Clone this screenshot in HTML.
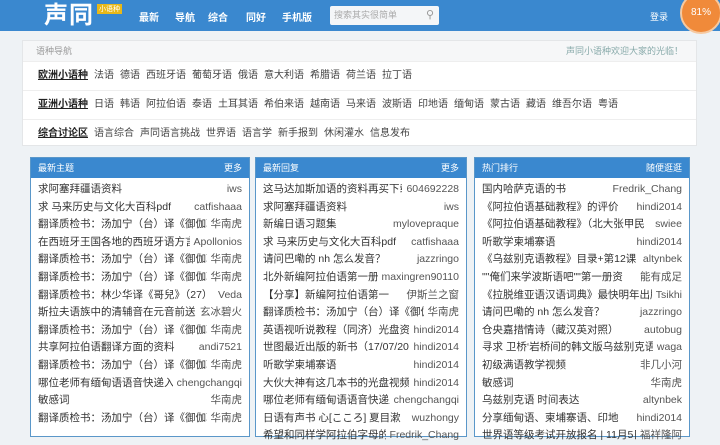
<html><head><style>
body{margin:0;width:720px;height:427px;overflow:hidden;background:#eef2f5;font-family:"Liberation Sans","Noto Sans CJK SC",sans-serif;}
.hd{position:absolute;left:0;top:0;width:720px;height:31px;background:#3a88cf;}
.logo{position:absolute;left:44px;top:2px;color:#fff;font-size:24px;line-height:28px;font-weight:bold;letter-spacing:1px;}
.tag{position:absolute;left:97px;top:4px;background:#e8b818;color:#fff;font-size:7px;padding:0 2px;}
.nav a{position:absolute;top:9px;color:#fff;font-size:10px;font-weight:bold;}
.search{position:absolute;left:330px;top:6px;width:109px;height:19px;background:#f4f6f8;border-radius:2px;font-size:9px;color:#aaa;line-height:19px;padding-left:4px;box-sizing:border-box;}
.box{position:absolute;left:22px;top:40px;width:675px;height:106px;background:#fff;border:1px solid #e4e6e8;box-sizing:border-box;}
.box .t{height:20px;background:#f6f7f8;font-size:9px;color:#999;line-height:20px;padding:0 13px;}
.box .t span{float:right;color:#8aa;}
.row{height:28px;border-top:1px solid #eee;font-size:10px;color:#444;line-height:28px;padding-left:15px;}
.row b{text-decoration:underline;color:#222;margin-right:6px;}
.row i{font-style:normal;margin-right:6px;}
.p{position:absolute;top:157px;height:280px;background:#fff;border:1px solid #5a97c9;box-sizing:border-box;}
.p .h{height:20px;background:#3a88cf;color:#fff;font-size:9px;line-height:20px;padding:0 7px;}
.p .h span{float:right;}
.p ul{margin:0;padding:3px 7px 0;list-style:none;}
.p li{display:flex;height:17.6px;line-height:17.6px;font-size:10.5px;color:#333;white-space:nowrap;}
.p li em{font-style:normal;flex:1;overflow:hidden;}
.p li span{color:#555;padding-left:4px;}
.ball{position:absolute;left:680px;top:-8px;width:38px;height:38px;border-radius:50%;background:#f08a3a;border:2px solid #f6c9a0;color:#fff;font-size:10px;text-align:center;line-height:38px;}
</style></head><body>
<div class="hd">
<div class="logo">声同</div><div class="tag">小语种</div>
<div class="nav"><a style="left:139px">最新</a><a style="left:175px">导航</a><a style="left:208px">综合</a><a style="left:246px">同好</a><a style="left:282px">手机版</a></div>
<div class="search">搜索其实很简单<span style="float:right;margin-right:5px;color:#999;font-size:11px">⚲</span></div>
<div style="position:absolute;left:650px;top:10px;color:#fff;font-size:9px">登录</div>
<div class="ball">81%</div>
</div>
<div class="box">
<div class="t">语种导航<span>声同小语种欢迎大家的光临！</span></div>
<div class="row"><b>欧洲小语种</b><i>法语</i><i>德语</i><i>西班牙语</i><i>葡萄牙语</i><i>俄语</i><i>意大利语</i><i>希腊语</i><i>荷兰语</i><i>拉丁语</i></div>
<div class="row"><b>亚洲小语种</b><i>日语</i><i>韩语</i><i>阿拉伯语</i><i>泰语</i><i>土耳其语</i><i>希伯来语</i><i>越南语</i><i>马来语</i><i>波斯语</i><i>印地语</i><i>缅甸语</i><i>蒙古语</i><i>藏语</i><i>维吾尔语</i><i>粤语</i></div>
<div class="row"><b>综合讨论区</b><i>语言综合</i><i>声同语言挑战</i><i>世界语</i><i>语言学</i><i>新手报到</i><i>休闲灌水</i><i>信息发布</i></div>
</div>
<div class="p" style="left:30px;width:220px"><div class="h">最新主题<span>更多</span></div><ul>
<li><em>求阿塞拜疆语资料</em><span>iws</span></li>
<li><em>求 马来历史与文化大百科pdf</em><span>catfishaaa</span></li>
<li><em>翻译质检书：汤加宁（台）译《御伽草</em><span>华南虎</span></li>
<li><em>在西班牙王国各地的西班牙语方言</em><span>Apollonios</span></li>
<li><em>翻译质检书：汤加宁（台）译《御伽草</em><span>华南虎</span></li>
<li><em>翻译质检书：汤加宁（台）译《御伽草</em><span>华南虎</span></li>
<li><em>翻译质检书：林少华译《哥兒》（27）</em><span>Veda</span></li>
<li><em>斯拉夫语族中的清辅音在元音前送不</em><span>玄冰碧火</span></li>
<li><em>翻译质检书：汤加宁（台）译《御伽草</em><span>华南虎</span></li>
<li><em>共享阿拉伯语翻译方面的资料</em><span>andi7521</span></li>
<li><em>翻译质检书：汤加宁（台）译《御伽草</em><span>华南虎</span></li>
<li><em>哪位老师有缅甸语语音快递入</em><span>chengchangqi</span></li>
<li><em>敏感词</em><span>华南虎</span></li>
<li><em>翻译质检书：汤加宁（台）译《御伽草</em><span>华南虎</span></li>
</ul></div>
<div class="p" style="left:255px;width:212px"><div class="h">最新回复<span>更多</span></div><ul>
<li><em>这马达加斯加语的资料再买下载</em><span>604692228</span></li>
<li><em>求阿塞拜疆语资料</em><span>iws</span></li>
<li><em>新编日语习题集</em><span>mylovepraque</span></li>
<li><em>求 马来历史与文化大百科pdf</em><span>catfishaaa</span></li>
<li><em>请问巴嘞的 nh 怎么发音？</em><span>jazzringo</span></li>
<li><em>北外新编阿拉伯语第一册词</em><span>maxingren90110</span></li>
<li><em>【分享】新编阿拉伯语第一</em><span>伊斯兰之窗</span></li>
<li><em>翻译质检书：汤加宁（台）译《御伽草</em><span>华南虎</span></li>
<li><em>英语视听说教程（同济）光盘资料</em><span>hindi2014</span></li>
<li><em>世图最近出版的新书（17/07/201</em><span>hindi2014</span></li>
<li><em>听歌学柬埔寨语</em><span>hindi2014</span></li>
<li><em>大伙大神有这几本书的光盘视频和</em><span>hindi2014</span></li>
<li><em>哪位老师有缅甸语语音快递入</em><span>chengchangqi</span></li>
<li><em>日语有声书 心[こころ] 夏目漱</em><span>wuzhongy</span></li>
<li><em>希望和同样学阿拉伯字母的语</em><span>Fredrik_Chang</span></li>
</ul></div>
<div class="p" style="left:474px;width:216px"><div class="h">热门排行<span>随便逛逛</span></div><ul>
<li><em>国内哈萨克语的书</em><span>Fredrik_Chang</span></li>
<li><em>《阿拉伯语基础教程》的评价</em><span>hindi2014</span></li>
<li><em>《阿拉伯语基础教程》（北大张甲民</em><span>swiee</span></li>
<li><em>听歌学柬埔寨语</em><span>hindi2014</span></li>
<li><em>《乌兹别克语教程》目录+第12课</em><span>altynbek</span></li>
<li><em>""俺们来学波斯语吧""第一册资</em><span>能有成足</span></li>
<li><em>《拉脱维亚语汉语词典》最快明年出版</em><span>Tsikhi</span></li>
<li><em>请问巴嘞的 nh 怎么发音？</em><span>jazzringo</span></li>
<li><em>仓央嘉措情诗（藏汉英对照）</em><span>autobug</span></li>
<li><em>寻求 卫桥‘岩桥间的韩文版乌兹别克语</em><span>waga</span></li>
<li><em>初级满语教学视频</em><span>非几小河</span></li>
<li><em>敏感词</em><span>华南虎</span></li>
<li><em>乌兹别克语 时间表达</em><span>altynbek</span></li>
<li><em>分享缅甸语、柬埔寨语、印地</em><span>hindi2014</span></li>
<li><em>世界语等级考试开放报名 | 11月5日</em><span>福祥隆阿</span></li>
</ul></div>
</body></html>
